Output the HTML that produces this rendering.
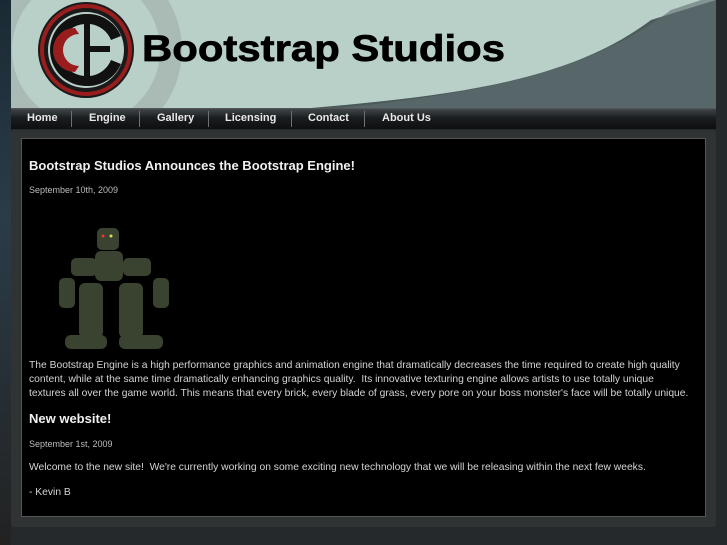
<!DOCTYPE html>
<html><head><style>
*{margin:0;padding:0;box-sizing:border-box}
body{width:727px;height:545px;overflow:hidden;background:#25292c;font-family:"Liberation Sans",sans-serif;position:relative}
.bgl{position:absolute;left:0;top:0;width:11px;height:545px;background:linear-gradient(#1a2a35,#2a3c48 40%,#222 100%)}
.hdr{position:absolute;left:11px;top:0;width:705px;height:108px;background:#b9d0c8;overflow:hidden}
.nav{position:absolute;left:11px;top:108px;width:705px;height:21px;background:linear-gradient(#40464a,#1a1d1f 45%,#0d0f10);border-top:1px solid #555}
.nav span{position:absolute;top:3px;color:#e8e8e8;font-weight:bold;font-size:11px}
.nav i{position:absolute;top:2px;width:1px;height:16px;background:#6a7074}
.outer{position:absolute;left:11px;top:130px;width:705px;height:397px;background:#303334;border-radius:3px}
.inner{position:absolute;left:21px;top:138px;width:685px;height:379px;background:#000;border:1px solid #555;color:#d8d8d8}
h2{position:absolute;left:7px;font-size:13px;color:#f0f0f0}
.d{position:absolute;left:7px;font-size:9px;color:#bbb}
p{position:absolute;left:7px;font-size:10.3px;line-height:14px;color:#d4d4d4;width:660px}
</style></head><body>
<div class="bgl"></div>
<div class="hdr">
<svg width="705" height="108" style="position:absolute;left:0;top:0">
<path d="M300 108 C450 95 560 80 640 20 L705 0 L705 108 Z" fill="#4d5a5c"/>
<path d="M330 108 C480 92 580 70 660 10 L705 -5 L705 108 Z" fill="#5f6e70" opacity=".6"/>
<circle cx="75" cy="50" r="85" fill="none" stroke="#a9bbb4" stroke-width="22"/>
<circle cx="75" cy="50" r="48" fill="#1a1a1a"/>
<circle cx="75" cy="50" r="44" fill="none" stroke="#9a1d1d" stroke-width="4"/>
<circle cx="75" cy="50" r="38" fill="#b9d0c8"/>
<path d="M75 14 A36 36 0 0 0 75 86 L75 76 A26 26 0 0 1 75 24 Z" fill="#111"/>
<path d="M64 28 A22 22 0 0 0 64 72 L68 66 A15 15 0 0 1 68 34 Z" fill="#9a1d1d"/>
<rect x="73" y="14" width="6" height="72" fill="#111"/>
<rect x="73" y="46" width="26" height="6" fill="#111"/>
<path d="M79 14 A36 36 0 0 1 110 36 L100 40 A26 26 0 0 0 79 24 Z M79 86 A36 36 0 0 0 110 64 L100 60 A26 26 0 0 1 79 76 Z" fill="#111"/>
<text x="131" y="61" font-family="Liberation Sans" font-weight="bold" font-size="37" fill="#000" stroke="#000" stroke-width="0.7" textLength="363" lengthAdjust="spacingAndGlyphs">Bootstrap Studios</text>
</svg>
</div>
<div class="nav">
<span style="left:16px">Home</span><i style="left:60px"></i>
<span style="left:78px">Engine</span><i style="left:128px"></i>
<span style="left:146px">Gallery</span><i style="left:197px"></i>
<span style="left:214px">Licensing</span><i style="left:280px"></i>
<span style="left:297px">Contact</span><i style="left:353px"></i>
<span style="left:371px">About Us</span>
</div>
<div class="outer"></div>
<div class="inner">
<h2 style="top:19px">Bootstrap Studios Announces the Bootstrap Engine!</h2>
<div class="d" style="top:46px">September 10th, 2009</div>
<svg width="130" height="130" style="position:absolute;left:35px;top:84px">
<g fill="#3a4230">
<rect x="40" y="5" width="22" height="22" rx="5"/>
<rect x="38" y="28" width="28" height="30" rx="6"/>
<rect x="14" y="35" width="26" height="18" rx="5"/>
<rect x="66" y="35" width="28" height="18" rx="5"/>
<rect x="2" y="55" width="16" height="30" rx="5"/>
<rect x="96" y="55" width="16" height="30" rx="5"/>
<rect x="22" y="60" width="24" height="55" rx="6"/>
<rect x="62" y="60" width="24" height="55" rx="6"/>
<rect x="8" y="112" width="42" height="14" rx="6"/>
<rect x="62" y="112" width="44" height="14" rx="6"/>
</g>
<circle cx="46" cy="13" r="1.5" fill="#e33"/><circle cx="54" cy="13" r="1.5" fill="#dd5"/>
</svg>
<p style="top:220px">The Bootstrap Engine is a high performance graphics and animation engine that dramatically decreases the time required to create high quality content, while at the same time dramatically enhancing graphics quality.&nbsp; Its innovative texturing engine allows artists to use totally unique textures all over the game world. This means that every brick, every blade of grass, every pore on your boss monster's face will be totally unique.</p>
<h2 style="top:272px">New website!</h2>
<div class="d" style="top:300px">September 1st, 2009</div>
<p style="top:322px">Welcome to the new site!&nbsp; We're currently working on some exciting new technology that we will be releasing within the next few weeks.</p>
<p style="top:347px">- Kevin B</p>
</div>
</body></html>
